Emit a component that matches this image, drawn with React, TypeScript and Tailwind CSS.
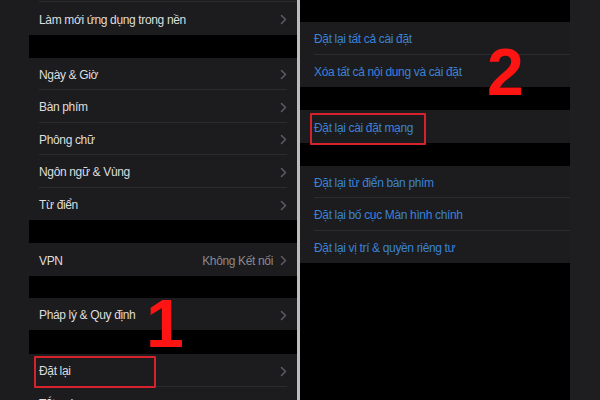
import React from "react";

const Chevron: React.FC = () => (
  <svg width="7" height="11" viewBox="0 0 7 11" className="shrink-0">
    <path d="M1.5 1.5 L5.5 5.5 L1.5 9.5" fill="none" stroke="#5e5e62" strokeWidth="1.5" strokeLinecap="round" strokeLinejoin="round" />
  </svg>
);

type Row = { label: string; value?: string };

const LeftRow: React.FC<{ row: Row; last?: boolean }> = ({ row, last }) => (
  <div className="flex h-[32.5px] shrink-0 items-stretch pl-[10px] pr-[10px]">
    <div className={`flex flex-1 items-center justify-between pt-[3px] ${last ? "" : "border-b border-[#2c2c2e]"}`}>
      <span className="text-[12px] tracking-[-0.35px] text-[#dedede]">{row.label}</span>
      <div className="flex items-center gap-[7px]">
        {row.value && <span className="text-[12px] tracking-[-0.35px] text-[#8a8a8e]">{row.value}</span>}
        <Chevron />
      </div>
    </div>
  </div>
);

const BlueRow: React.FC<{ label: string; last?: boolean }> = ({ label, last }) => (
  <div className="flex h-[32.5px] shrink-0 items-stretch pl-[14px]">
    <div className={`flex flex-1 items-center pt-[3px] ${last ? "" : "border-b border-[#2c2c2e]"}`}>
      <span className="text-[12px] tracking-[-0.35px] text-[#3b82d6]">{label}</span>
    </div>
  </div>
);

const Gap: React.FC<{ h: string }> = ({ h }) => <div className={`${h} shrink-0 bg-black`} />;

export default function App() {
  return (
    <div
      className="relative flex h-[400px] w-[600px] overflow-hidden bg-[#1c1c1e]"
      style={{ fontFamily: "'Liberation Sans', Arial, sans-serif" }}
    >
      {/* left screen */}
      <div className="flex w-[297px] shrink-0 bg-[#1c1c1e] pl-[29px]">
        <div className="flex flex-1 flex-col bg-[#1c1c1e]">
          <div className="ml-[10px] h-[2px] shrink-0 border-b border-[#2c2c2e]" />
          <LeftRow row={{ label: "Làm mới ứng dụng trong nền" }} last />
          <Gap h="h-[23px]" />
          <LeftRow row={{ label: "Ngày & Giờ" }} />
          <LeftRow row={{ label: "Bàn phím" }} />
          <LeftRow row={{ label: "Phông chữ" }} />
          <LeftRow row={{ label: "Ngôn ngữ & Vùng" }} />
          <LeftRow row={{ label: "Từ điển" }} last />
          <Gap h="h-[23px]" />
          <LeftRow row={{ label: "VPN", value: "Không Kết nối" }} last />
          <Gap h="h-[22px]" />
          <LeftRow row={{ label: "Pháp lý & Quy định" }} last />
          <Gap h="h-[24px]" />
          <LeftRow row={{ label: "Đặt lại" }} />
          <LeftRow row={{ label: "Tắt máy" }} last />
        </div>
      </div>

      {/* divider */}
      <div className="w-[3px] shrink-0 bg-[#bdbdbd]" />

      {/* right screen */}
      <div className="flex flex-1 bg-[#1e1e20] pr-[30px]">
        <div className="flex flex-1 flex-col bg-black">
          <Gap h="h-[22px]" />
          <div className="shrink-0 bg-[#1c1c1e]">
            <BlueRow label="Đặt lại tất cả cài đặt" />
            <BlueRow label="Xóa tất cả nội dung và cài đặt" last />
          </div>
          <Gap h="h-[23px]" />
          <div className="shrink-0 bg-[#1c1c1e]">
            <BlueRow label="Đặt lại cài đặt mạng" last />
          </div>
          <Gap h="h-[23px]" />
          <div className="shrink-0 bg-[#1c1c1e]">
            <BlueRow label="Đặt lại từ điển bàn phím" />
            <BlueRow label="Đặt lại bố cục Màn hình chính" />
            <BlueRow label="Đặt lại vị trí & quyền riêng tư" last />
          </div>
          <div className="flex-1 bg-black" />
        </div>
      </div>

      {/* annotations */}
      <div className="pointer-events-none absolute left-[34px] top-[356px] h-[32px] w-[122px] rounded-[1px] border-2 border-[#d5222c]" />
      <div className="pointer-events-none absolute left-[310px] top-[113px] h-[32px] w-[116px] rounded-[1px] border-2 border-[#d5222c]" />
      <div className="pointer-events-none absolute left-[146px] top-[289px] text-[68px] font-bold leading-none text-[#ff1414]">
        1
      </div>
      <div className="pointer-events-none absolute left-[487px] top-[39px] text-[66px] font-bold leading-none text-[#ff1414]">
        2
      </div>
    </div>
  );
}
